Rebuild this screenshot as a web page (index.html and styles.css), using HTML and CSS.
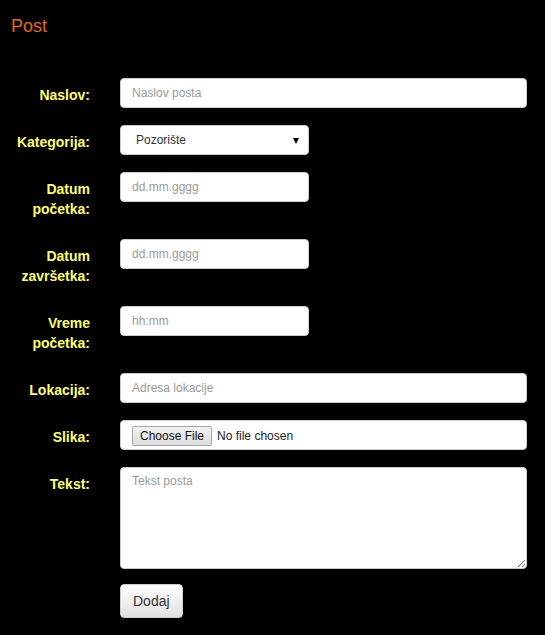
FILE: index.html
```html
<!DOCTYPE html>
<html>
<head>
<meta charset="utf-8">
<link rel="stylesheet" href="styles.css">
</head>
<body>
<h1 class="title">Post</h1>
<form class="form">
  <div class="row">
    <label class="label">Naslov:</label>
    <input class="control" type="text" placeholder="Naslov posta">
  </div>
  <div class="row">
    <label class="label">Kategorija:</label>
    <div class="select-wrap">
      <select class="control select">
        <option>Pozorište</option>
      </select>
    </div>
  </div>
  <div class="row">
    <label class="label">Datum početka:</label>
    <input class="control short" type="text" placeholder="dd.mm.gggg">
  </div>
  <div class="row">
    <label class="label">Datum završetka:</label>
    <input class="control short" type="text" placeholder="dd.mm.gggg">
  </div>
  <div class="row">
    <label class="label">Vreme početka:</label>
    <input class="control short" type="text" placeholder="hh:mm">
  </div>
  <div class="row">
    <label class="label">Lokacija:</label>
    <input class="control" type="text" placeholder="Adresa lokacije">
  </div>
  <div class="row">
    <label class="label">Slika:</label>
    <input class="control file" type="file">
  </div>
  <div class="row">
    <label class="label">Tekst:</label>
    <textarea class="control area" placeholder="Tekst posta"></textarea>
  </div>
  <div class="row">
    <span></span>
    <div><button class="btn" type="button">Dodaj</button></div>
  </div>
</form>
</body>
</html>
```
FILE: styles.css
```css
body {
  margin: 0;
  background: #000;
  font-family: "Liberation Sans", Arial, sans-serif;
}
.title {
  margin: 16px 0 0 11px;
  font-size: 18px;
  font-weight: normal;
  line-height: 21px;
  color: #e3661c;
}
.form {
  margin-top: 41px;
  padding-right: 18px;
}
.row {
  display: grid;
  grid-template-columns: 90px 1fr;
  column-gap: 30px;
  align-items: start;
  margin-bottom: 15px;
}
.label {
  padding: 7px 0 0 0;
  margin-bottom: 5px;
  text-align: right;
  font-weight: bold;
  font-size: 14px;
  line-height: 20px;
  color: #ffff66;
}
.control {
  box-sizing: border-box;
  display: block;
  width: 100%;
  height: 30px;
  margin: 0;
  padding: 6px 11px;
  border: 1px solid #ccc;
  border-radius: 4px;
  background: #fff;
  font-family: "Liberation Sans", Arial, sans-serif;
  font-size: 12px;
  color: #555;
  outline: none;
}
.control::placeholder {
  color: #999;
}
.short {
  width: 189px;
}
.select-wrap {
  position: relative;
  width: 189px;
}
.select {
  -webkit-appearance: none;
  appearance: none;
  padding-left: 15px;
  color: #333;
}
.select-wrap::after {
  content: "";
  position: absolute;
  right: 10px;
  top: 13px;
  border-left: 3px solid transparent;
  border-right: 3px solid transparent;
  border-top: 6px solid #000;
}
.file {
  padding: 5px 11px;
  color: #222;
}
.file::file-selector-button {
  box-sizing: border-box;
  height: 20px;
  margin: 0 5px 0 0;
  padding: 1px 7px;
  border: 1px solid #a6a6a6;
  border-radius: 2px;
  background: linear-gradient(#f2f2f2, #dcdcdc);
  font-family: "Liberation Sans", Arial, sans-serif;
  font-size: 12px;
  color: #111;
}
.area {
  height: 102px;
  resize: vertical;
}
.btn {
  box-sizing: border-box;
  padding: 6px 12px;
  border: 1px solid #ccc;
  border-radius: 4px;
  background: linear-gradient(#fff, #e0e0e0);
  font-family: "Liberation Sans", Arial, sans-serif;
  font-size: 14px;
  line-height: 20px;
  color: #333;
}
```
